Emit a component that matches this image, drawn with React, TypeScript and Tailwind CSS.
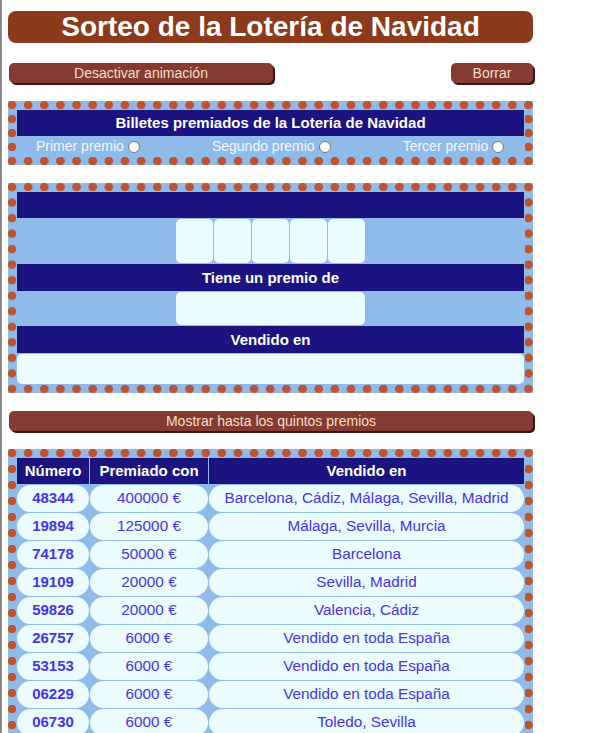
import React from "react";

const rows = [
  ["48344", "400000 €", "Barcelona, Cádiz, Málaga, Sevilla, Madrid"],
  ["19894", "125000 €", "Málaga, Sevilla, Murcia"],
  ["74178", "50000 €", "Barcelona"],
  ["19109", "20000 €", "Sevilla, Madrid"],
  ["59826", "20000 €", "Valencia, Cádiz"],
  ["26757", "6000 €", "Vendido en toda España"],
  ["53153", "6000 €", "Vendido en toda España"],
  ["06229", "6000 €", "Vendido en toda España"],
  ["06730", "6000 €", "Toledo, Sevilla"],
];

function Btn({ label, className }: { label: string; className: string }) {
  return (
    <div
      className={`h-[20px] rounded-[5px] bg-[#853b33] text-[#f3dfc2] text-[14px] leading-[20px] text-center shadow-[2px_2px_0_#3a1410] ${className}`}
    >
      {label}
    </div>
  );
}

function Radio({ label }: { label: string }) {
  return (
    <div className="flex items-center text-[14px] text-[#f2f8ff] pt-px">
      <span>{label}</span>
      <span className="ml-[4px] w-[12px] h-[12px] rounded-full bg-white border border-[#777]" />
    </div>
  );
}

const dots =
  "p-2 bg-[#8fbbeb] bg-[image:radial-gradient(circle_at_center,#c0522e_4px,transparent_4.6px)] bg-repeat";

export default function App() {
  return (
    <div
      className="h-[733px] overflow-hidden bg-white border-l-2 border-[#8a8a8a] pl-[6px] pt-[11px]"
      style={{ fontFamily: '"Liberation Sans", Arial, sans-serif' }}
    >
      <div className="w-[525px]">
        <div className="h-[32px] rounded-[8px] bg-[#8b3a1b] text-white font-bold text-[28px] leading-[32px] text-center">
          Sorteo de la Lotería de Navidad
        </div>

        <div className="mt-[20px] flex justify-between pl-px">
          <Btn label="Desactivar animación" className="w-[264px]" />
          <Btn label="Borrar" className="w-[82px]" />
        </div>

        {/* Panel 1 */}
        <div className={`mt-[18px] h-[64px] ${dots} bg-[length:16.156px_14px] bg-[position:-4.078px_-3px]`}>
          <div className="bg-[#8fbbeb] p-px h-full">
            <div className="h-[26px] bg-[#1b1380] text-white font-bold text-[15px] leading-[26px] text-center">
              Billetes premiados de la Lotería de Navidad
            </div>
            <div className="h-[20px] flex items-center gap-[72px] pl-[19px]">
              <Radio label="Primer premio" />
              <Radio label="Segundo premio" />
              <Radio label="Tercer premio" />
            </div>
          </div>
        </div>

        {/* Panel 2 */}
        <div className={`mt-[18px] h-[210px] ${dots} bg-[length:16.156px_15.538px] bg-[position:-4.078px_-3.769px]`}>
          <div className="bg-[#8fbbeb] p-px h-full flex flex-col gap-px">
            <div className="h-[26px] bg-[#1b1380]" />
            <div className="h-[44px] flex justify-center gap-px">
              {[0, 1, 2, 3, 4].map((i) => (
                <div key={i} className="w-[37px] h-[44px] rounded-[5px] bg-[#eafcfe]" />
              ))}
            </div>
            <div className="h-[27px] bg-[#1b1380] text-white font-bold text-[15px] leading-[27px] text-center">
              Tiene un premio de
            </div>
            <div className="h-[33px] flex justify-center">
              <div className="w-[189px] h-[33px] rounded-[5px] bg-[#eafcfe]" />
            </div>
            <div className="h-[27px] bg-[#1b1380] text-white font-bold text-[15px] leading-[27px] text-center">
              Vendido en
            </div>
            <div className="h-[30px] rounded-[5px] bg-[#eafcfe]" />
          </div>
        </div>

        <div className="mt-[18px] pl-px">
          <Btn label="Mostrar hasta los quintos premios" className="w-[524px]" />
        </div>

        {/* Panel 3 */}
        <div className={`mt-[18px] ${dots} bg-[length:16.156px_16px] bg-[position:-4.078px_-4px]`}>
          <div className="bg-[#8fbbeb] p-px">
            <div className="grid grid-cols-[72px_118px_315px] gap-px">
              {["Número", "Premiado con", "Vendido en"].map((h) => (
                <div
                  key={h}
                  className="h-[26px] bg-[#1b1380] text-white font-bold text-[15px] leading-[26px] text-center"
                >
                  {h}
                </div>
              ))}
              {rows.map((r) => (
                <React.Fragment key={r[0]}>
                  <div className="h-[27px] rounded-[14px] bg-[#eafcfe] text-[#4a32e6] font-bold text-[15px] leading-[25px] text-center">
                    {r[0]}
                  </div>
                  <div className="h-[27px] rounded-[14px] bg-[#eafcfe] text-[#4a32e6] text-[15.3px] leading-[25px] text-center">
                    {r[1]}
                  </div>
                  <div className="h-[27px] rounded-[14px] bg-[#eafcfe] text-[#4a32e6] text-[15.3px] leading-[25px] text-center">
                    {r[2]}
                  </div>
                </React.Fragment>
              ))}
            </div>
          </div>
        </div>
      </div>
    </div>
  );
}
